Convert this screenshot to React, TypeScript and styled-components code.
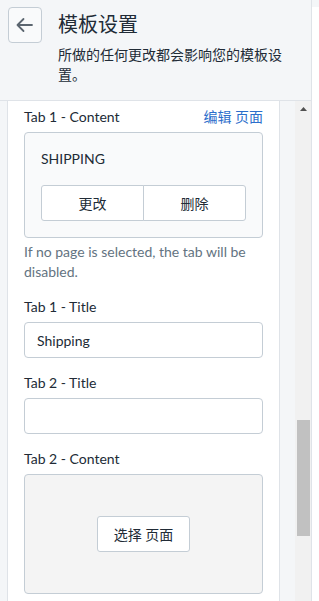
import styled, { createGlobalStyle } from "styled-components"

const GlobalStyle = createGlobalStyle`
	html, body {
		margin: 0;
		padding: 0;
		height: 100%;
		overflow: hidden;
	}
	body {
		font-family: Lato, "Noto Sans CJK SC", sans-serif;
		color: #212b36;
		background: #f4f6f8;
	}
	* {
		box-sizing: border-box;
	}
`

const Page = styled.div`
	display: flex;
	width: 319px;
	height: 601px;
	background: #f4f6f8;
`

const Sidebar = styled.aside`
	width: 312px;
	display: flex;
	flex-direction: column;
	border-right: 1px solid #dfe3e8;
`

const Preview = styled.div`
	flex: 1;
	margin-top: 7px;
	background: #ffffff;
`

const Header = styled.header`
	height: 101px;
	flex-shrink: 0;
	display: flex;
	align-items: flex-start;
	gap: 16px;
	padding: 7px 8px 0;
	border-bottom: 1px solid #dfe3e8;
`

const BackButton = styled.button`
	width: 34px;
	height: 36px;
	flex-shrink: 0;
	display: flex;
	align-items: center;
	justify-content: center;
	padding: 0;
	border: 1px solid #c4cdd5;
	border-radius: 4px;
	background: #f9fafb;
	color: #5c6670;
	cursor: pointer;
`

const HeaderText = styled.div`
	padding-top: 3px;
	width: 232px;
`

const Title = styled.h1`
	margin: 0;
	font-size: 20px;
	line-height: 28px;
	font-weight: 400;
`

const Subtitle = styled.p`
	margin: 7px 0 0;
	font-size: 14px;
	line-height: 20px;
`

const Body = styled.div`
	flex: 1;
	display: flex;
	overflow: hidden;
`

const ScrollContent = styled.div`
	flex: 1;
	padding: 0 15px 0 7px;
`

const Card = styled.section`
	background: #ffffff;
	border-left: 1px solid #dfe3e8;
	border-right: 1px solid #dfe3e8;
	padding: 6px 16px 40px;
	min-height: 100%;
`

const Field = styled.div<{ $gap?: number }>`
	margin-top: ${(p) => p.$gap ?? 15}px;

	&:first-child {
		margin-top: 0;
	}
`

const LabelRow = styled.div`
	display: flex;
	justify-content: space-between;
	align-items: center;
	margin-bottom: 5px;
`

const Label = styled.label`
	font-size: 14px;
	line-height: 20px;
`

const Link = styled.a`
	font-size: 14px;
	line-height: 20px;
	color: #2c6ecb;
	text-decoration: none;
	cursor: pointer;
`

const ResourceBox = styled.div<{ $empty?: boolean }>`
	border: 1px solid #c4cdd5;
	border-radius: 4px;
	background: ${(p) => (p.$empty ? "#f4f4f4" : "#f9fafb")};
	padding: 16px;
	${(p) =>
		p.$empty &&
		`
		height: 120px;
		display: flex;
		align-items: center;
		justify-content: center;
	`}
`

const ResourceName = styled.div`
	font-size: 14px;
	line-height: 20px;
	margin-bottom: 16px;
`

const ButtonGroup = styled.div`
	display: flex;
`

const Button = styled.button`
	flex: 1;
	height: 36px;
	padding: 0 16px;
	font-family: inherit;
	font-size: 14px;
	color: #212b36;
	background: #ffffff;
	border: 1px solid #c4cdd5;
	border-radius: 3px;
	cursor: pointer;
`

const GroupButton = styled(Button)`
	&:first-child {
		border-top-right-radius: 0;
		border-bottom-right-radius: 0;
	}
	&:last-child {
		margin-left: -1px;
		border-top-left-radius: 0;
		border-bottom-left-radius: 0;
	}
`

const SelectButton = styled(Button)`
	flex: none;
	width: 93px;
	padding: 0;
`

const HelpText = styled.p`
	margin: 4px 0 0;
	font-size: 14px;
	line-height: 20px;
	color: #637381;
`

const Input = styled.input`
	display: block;
	width: 100%;
	height: 36px;
	padding: 0 12px;
	font-family: inherit;
	font-size: 14px;
	color: #212b36;
	background: #ffffff;
	border: 1px solid #c4cdd5;
	border-radius: 4px;
	outline: none;
`

const Scrollbar = styled.div`
	width: 16px;
	flex-shrink: 0;
	display: flex;
	flex-direction: column;
	background: #f1f1f1;
`

const ScrollArrow = styled.div`
	height: 16px;
	display: flex;
	align-items: center;
	justify-content: center;
	color: #505050;
`

const ScrollThumb = styled.div`
	height: 116px;
	margin: 0 1px 0 2px;
	background: #c1c1c1;
`

const App = () => {
	// thumb sits at y=420 in the reference, track starts at y=101 + 16px arrow
	const thumbOffset = 420 - 101 - 16

	return (
		<>
			<GlobalStyle />
			<Page>
				<Sidebar>
					<Header>
						<BackButton aria-label="返回">
							<svg width="20" height="20" viewBox="0 0 20 20" fill="none">
								<path
									d="M17 10H2.5M8.5 4l-6 6 6 6"
									stroke="currentColor"
									strokeWidth="1.8"
									strokeLinecap="round"
									strokeLinejoin="round"
								/>
							</svg>
						</BackButton>
						<HeaderText>
							<Title>模板设置</Title>
							<Subtitle>所做的任何更改都会影响您的模板设置。</Subtitle>
						</HeaderText>
					</Header>
					<Body>
						<ScrollContent>
							<Card>
								<Field>
									<LabelRow>
										<Label>Tab 1 - Content</Label>
										<Link>编辑 页面</Link>
									</LabelRow>
									<ResourceBox>
										<ResourceName>SHIPPING</ResourceName>
										<ButtonGroup>
											<GroupButton>更改</GroupButton>
											<GroupButton>删除</GroupButton>
										</ButtonGroup>
									</ResourceBox>
									<HelpText>
										If no page is selected, the tab will be disabled.
									</HelpText>
								</Field>
								<Field>
									<LabelRow>
										<Label>Tab 1 - Title</Label>
									</LabelRow>
									<Input defaultValue="Shipping" />
								</Field>
								<Field>
									<LabelRow>
										<Label>Tab 2 - Title</Label>
									</LabelRow>
									<Input defaultValue="" />
								</Field>
								<Field>
									<LabelRow>
										<Label>Tab 2 - Content</Label>
									</LabelRow>
									<ResourceBox $empty>
										<SelectButton>选择 页面</SelectButton>
									</ResourceBox>
								</Field>
							</Card>
						</ScrollContent>
						<Scrollbar>
							<ScrollArrow>
								<svg width="7" height="4" viewBox="0 0 7 4">
									<path d="M3.5 0L7 4H0z" fill="currentColor" />
								</svg>
							</ScrollArrow>
							<ScrollThumb style={{ marginTop: thumbOffset }} />
						</Scrollbar>
					</Body>
				</Sidebar>
				<Preview />
			</Page>
		</>
	)
}

export default App
